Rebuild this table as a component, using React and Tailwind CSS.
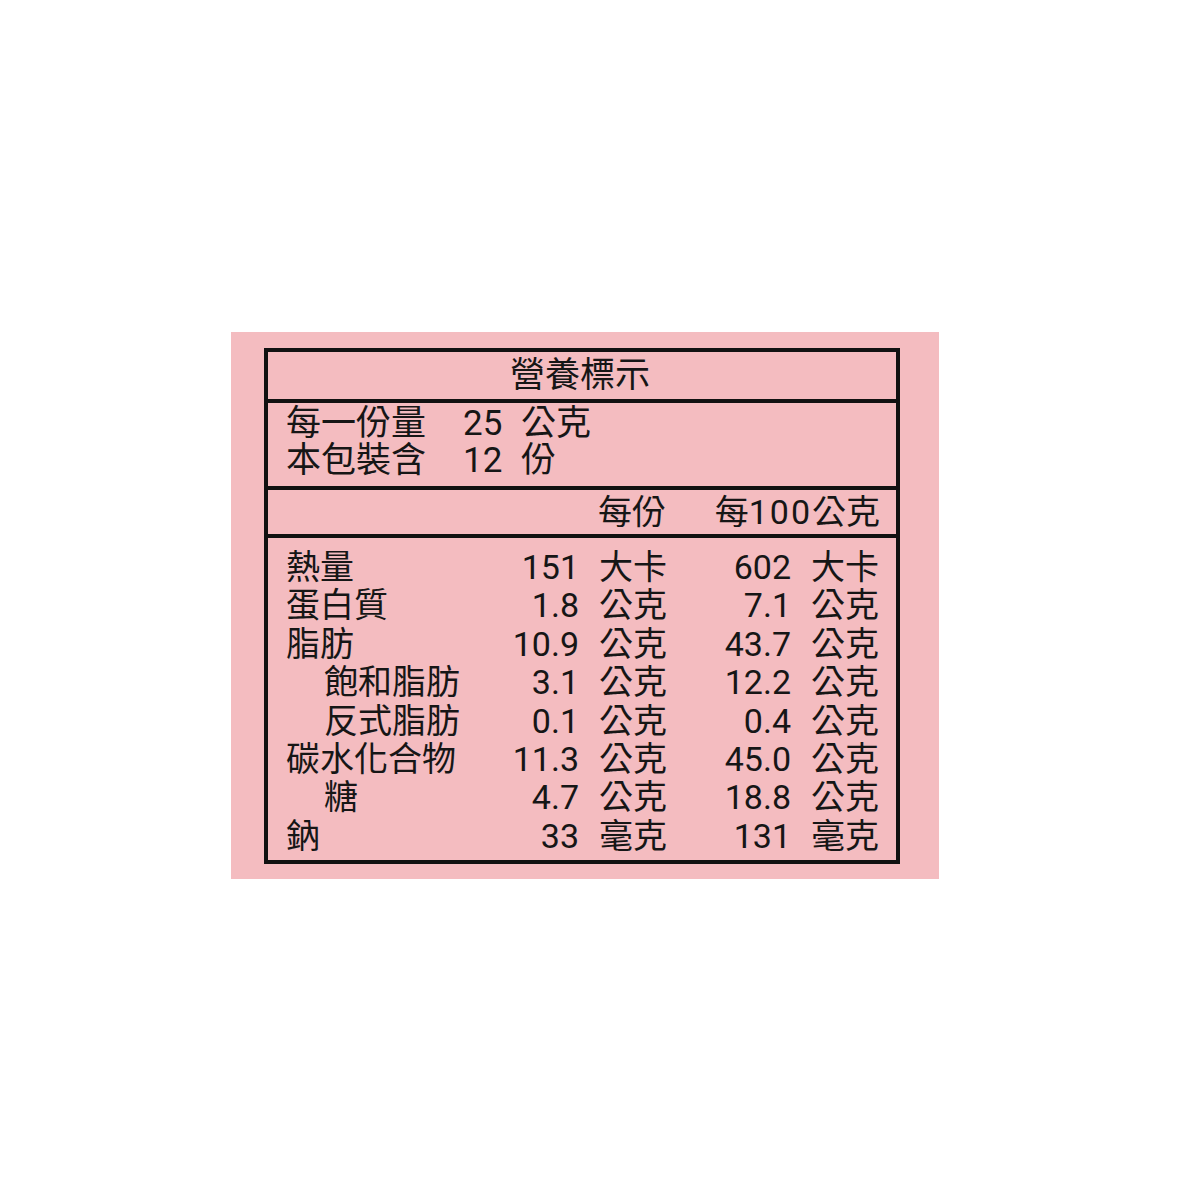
import React from "react";

const FONT = 'Roboto, "Noto Sans CJK TC", sans-serif';

const rows = [
  { label: "熱量", indent: false, a: "151", au: "大卡", b: "602", bu: "大卡" },
  { label: "蛋白質", indent: false, a: "1.8", au: "公克", b: "7.1", bu: "公克" },
  { label: "脂肪", indent: false, a: "10.9", au: "公克", b: "43.7", bu: "公克" },
  { label: "飽和脂肪", indent: true, a: "3.1", au: "公克", b: "12.2", bu: "公克" },
  { label: "反式脂肪", indent: true, a: "0.1", au: "公克", b: "0.4", bu: "公克" },
  { label: "碳水化合物", indent: false, a: "11.3", au: "公克", b: "45.0", bu: "公克" },
  { label: "糖", indent: true, a: "4.7", au: "公克", b: "18.8", bu: "公克" },
  { label: "鈉", indent: false, a: "33", au: "毫克", b: "131", bu: "毫克" },
];

export default function App() {
  return (
    <div className="h-[1200px] w-[1200px] bg-white pl-[231px] pt-[332px]" style={{ fontFamily: FONT }}>
      <div className="h-[547px] w-[708px] bg-[#f4bcc0] pl-[33px] pt-[16px] text-[#161616]">
        <div className="flex h-[516px] w-[636px] flex-col border-4 border-[#111]">
          <div className="flex h-[47px] items-center justify-center pr-[4px] text-[35px] leading-none">
            營養標示
          </div>

          <div className="h-[87px] border-t-4 border-[#111] pl-[18px] pt-[2px] text-[35px] leading-[37px]">
            <div className="flex">
              <span className="w-[177px]">每一份量</span>
              <span className="w-[58px]">25</span>
              <span>公克</span>
            </div>
            <div className="flex">
              <span className="w-[177px]">本包裝含</span>
              <span className="w-[58px]">12</span>
              <span>份</span>
            </div>
          </div>

          <div className="flex h-[48px] items-center border-t-4 border-[#111] pl-[18px] text-[34px] leading-none">
            <span className="w-[312px]" />
            <span className="w-[70px]">每份</span>
            <span className="w-[212px] text-right">
              每<span className="tracking-[2px]">100</span>公克
            </span>
          </div>

          <div className="flex-1 border-t-4 border-[#111] pl-[18px] pt-[10px] text-[34px] leading-[38.4px]">
            {rows.map((row) => (
              <div key={row.label} className="flex">
                <span className={`w-[217px] ${row.indent ? "pl-[38px]" : ""}`}>{row.label}</span>
                <span className="w-[76px] text-right">{row.a}</span>
                <span className="ml-[20px] w-[70px]">{row.au}</span>
                <span className="w-[122px] text-right">{row.b}</span>
                <span className="ml-[20px]">{row.bu}</span>
              </div>
            ))}
          </div>
        </div>
      </div>
    </div>
  );
}
